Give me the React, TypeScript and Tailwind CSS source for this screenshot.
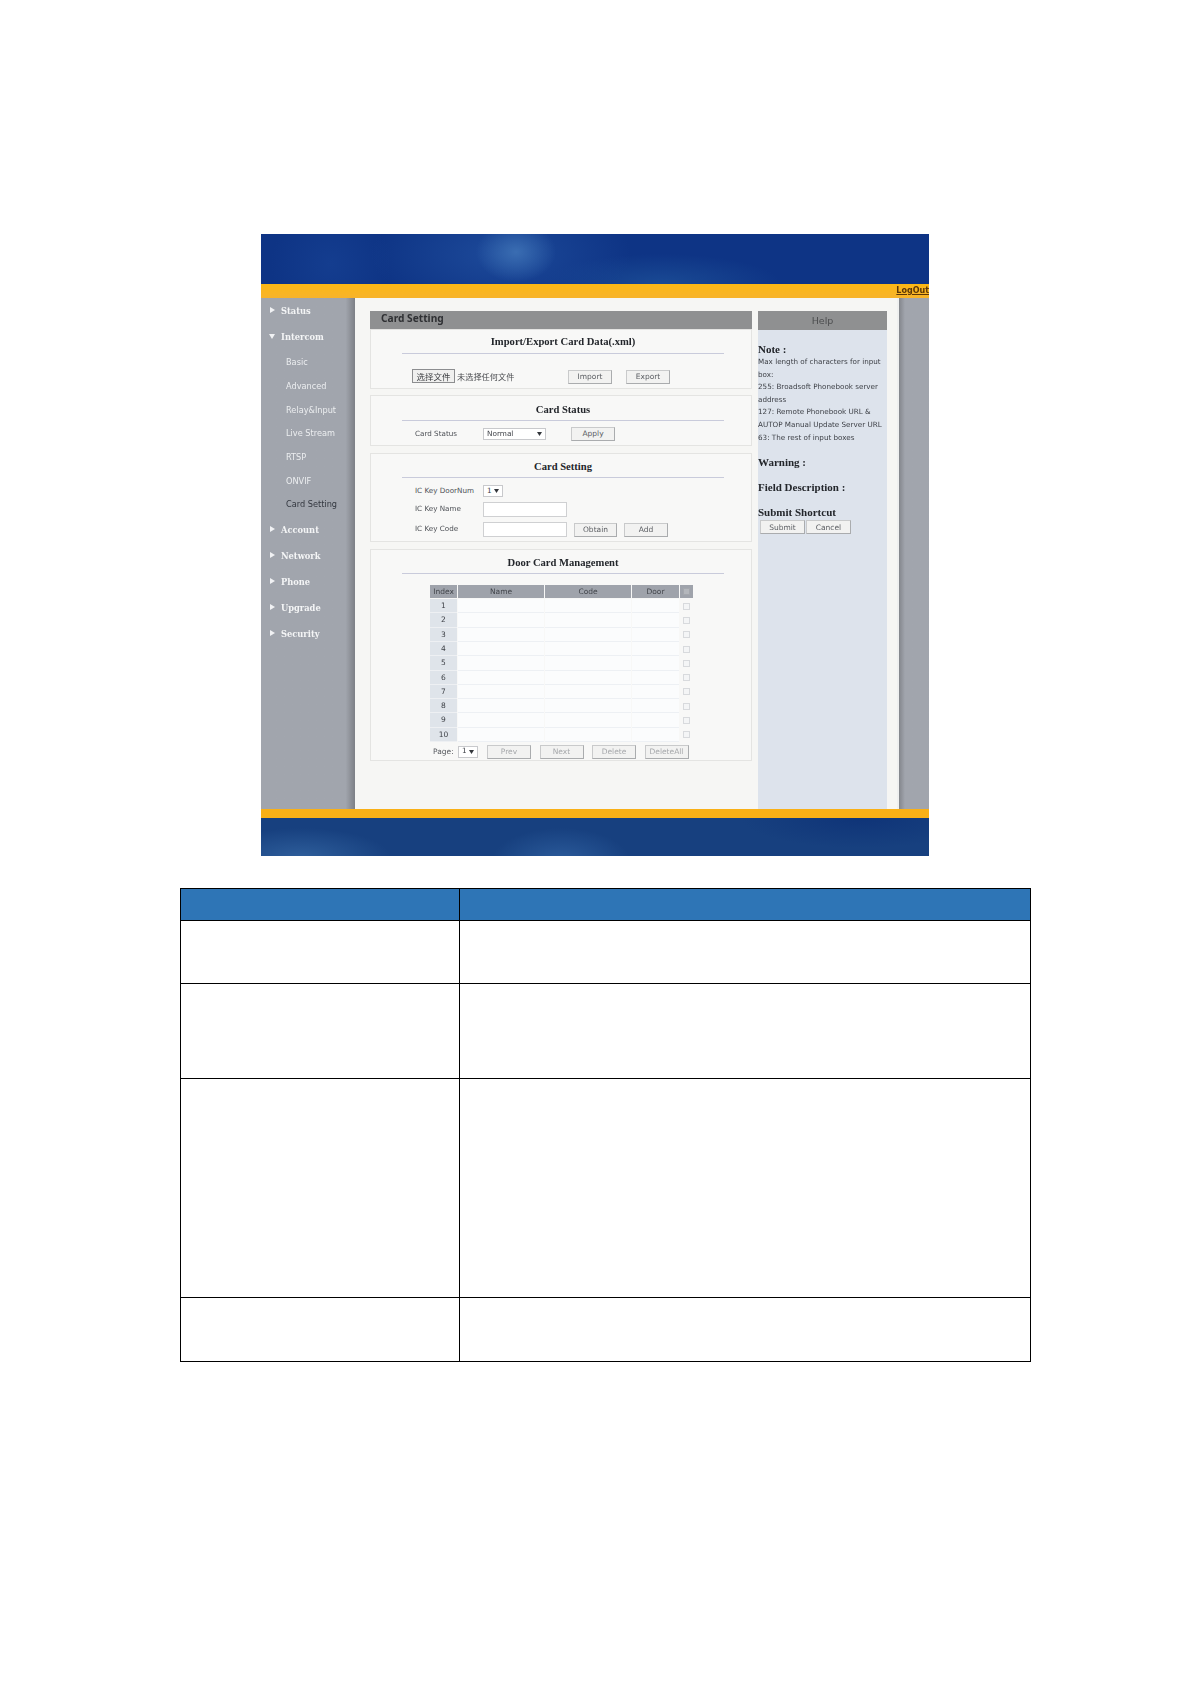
const serif = 'font-["DejaVu_Serif",serif]'
const sans = 'font-["DejaVu_Sans",sans-serif]'
const title = 'font-["Liberation_Serif",serif]'

function Nav({ label, open }: { label: string; open?: boolean }) {
  return (
    <div className="h-[26px] flex items-center pl-[8px] gap-[6px]">
      <svg width="6" height="6" viewBox="0 0 6 6" className="shrink-0 mb-[2px]">
        {open ? <path d="M0 1 L6 1 L3 6 Z" fill="#f1f2f4" /> : <path d="M1 0 L6 3 L1 6 Z" fill="#f1f2f4" />}
      </svg>
      <span className={`${serif} text-[8.3px] font-bold text-[#f4f5f6]`}>{label}</span>
    </div>
  )
}

function SubNav({ label, active }: { label: string; active?: boolean }) {
  return (
    <div className={`${sans} h-[23.7px] flex items-center pl-[25px] text-[8.2px] ${active ? 'text-[#33373f]' : 'text-[#eceef0]'}`}>
      {label}
    </div>
  )
}

function Btn({ label, w, faded }: { label: string; w: string; faded?: boolean }) {
  return (
    <div className={`${sans} ${w} h-[14px] shrink-0 flex items-center justify-center bg-[#f2f2f1] border border-[#c9cacb] border-r-[#aaacae] border-b-[#aaacae] text-[7.5px] ${faded ? 'text-[#a6a8ab]' : 'text-[#5a5d62]'}`}>
      {label}
    </div>
  )
}

function Panel({ title: text, h, head, children }: { title: string; h: string; head: string; children: React.ReactNode }) {
  return (
    <div className={`${h} bg-[#f8f8f7] border border-[#e4e4e2] flex flex-col`}>
      <div className={`${title} ${head} flex items-center justify-center pl-[4px] text-[10.6px] font-bold text-[#23262b]`}>
        {text}
      </div>
      <div className="h-px ml-[31px] w-[322px] bg-[#c9cbdb]" />
      {children}
    </div>
  )
}

function Label({ text }: { text: string }) {
  return <div className={`${sans} w-[68px] shrink-0 text-[7.2px] text-[#4d5056]`}>{text}</div>
}

function Select({ label, w }: { label: string; w: string }) {
  return (
    <div className={`${sans} ${w} h-[12px] shrink-0 flex items-center justify-between px-[3px] bg-white border border-[#c8c9cc] text-[7.3px] text-[#3c3f45]`}>
      <span>{label}</span>
      <svg width="5" height="4" viewBox="0 0 5 4" className="shrink-0">
        <path d="M0 0 L5 0 L2.5 4 Z" fill="#33363b" />
      </svg>
    </div>
  )
}

const rows = ['1', '2', '3', '4', '5', '6', '7', '8', '9', '10']

function DoorTable() {
  return (
    <div className="mt-[11px] ml-[59px] w-[263px]">
      <div className={`${sans} grid grid-cols-[27px_86px_86px_47px_13px] gap-x-px h-[13px] mb-px text-[7.5px] text-[#42454b]`}>
        {['Index', 'Name', 'Code', 'Door'].map((t) => (
          <div key={t} className="bg-[#9fa3ab] flex items-center justify-center">{t}</div>
        ))}
        <div className="bg-[#9fa3ab] flex items-center justify-center">
          <div className="w-[7px] h-[7px] bg-[#b4b7bc] border border-[#a4a7ad]" />
        </div>
      </div>
      {rows.map((r) => (
        <div key={r} className={`${sans} grid grid-cols-[27px_86px_86px_47px_13px] gap-x-px h-[14.3px] text-[7.5px] text-[#3c3f45]`}>
          <div className="bg-[#dfe4ea] border-b border-[#eef0f3] flex items-center justify-center">{r}</div>
          <div className="bg-[#fbfcfd] border-b border-[#edf0f4]" />
          <div className="bg-[#fbfcfd] border-b border-[#edf0f4]" />
          <div className="bg-[#fbfcfd] border-b border-[#edf0f4]" />
          <div className="flex items-center justify-center">
            <div className="w-[7px] h-[7px] bg-[#f4f5f6] border border-[#d8dadd]" />
          </div>
        </div>
      ))}
      <div className="flex items-center h-[17px] mt-[1px] pl-[3px]">
        <span className={`${sans} w-[25px] shrink-0 text-[7.5px] text-[#55585d]`}>Page:</span>
        <Select label="1" w="w-[20px]" />
        <div className="flex ml-[9px] gap-[8.5px]">
          <Btn label="Prev" w="w-[44px]" faded />
          <Btn label="Next" w="w-[44px]" faded />
          <Btn label="Delete" w="w-[44px]" faded />
          <Btn label="DeleteAll" w="w-[44px]" faded />
        </div>
      </div>
    </div>
  )
}

function Help() {
  const lines = [
    'Max length of characters for input',
    'box:',
    '255: Broadsoft Phonebook server',
    'address',
    '127: Remote Phonebook URL &',
    'AUTOP Manual Update Server URL',
    '63: The rest of input boxes',
  ]
  const head = `${title} mt-[12px] h-[13px] flex items-center text-[11px] font-bold text-[#23262b]`
  return (
    <div className="w-[129px] ml-[6px] bg-[#dde3ec] flex flex-col">
      <div className={`${sans} h-[19px] pt-[1px] bg-[#8f9091] flex items-center justify-center text-[9.5px] text-[#4c4d4f]`}>Help</div>
      <div className={`${title} mt-[13px] h-[13px] flex items-center text-[11px] font-bold text-[#23262b]`}>Note :</div>
      <div className={`${sans} text-[7.2px] leading-[12.6px] text-[#3c3f45] whitespace-nowrap`}>
        {lines.map((l) => (
          <div key={l}>{l}</div>
        ))}
      </div>
      <div className={head}>Warning :</div>
      <div className={head}>Field Description :</div>
      <div className={head}>Submit Shortcut</div>
      <div className="flex ml-[2px] mt-[1px] gap-px">
        <Btn label="Submit" w="w-[45px]" />
        <Btn label="Cancel" w="w-[45px]" />
      </div>
    </div>
  )
}

function Row({ h, header, last }: { h: string; header?: boolean; last?: boolean }) {
  return (
    <div className={`${h} flex ${last ? '' : 'border-b border-black'} ${header ? 'bg-[#2e75b6]' : 'bg-white'}`}>
      <div className="w-[279px] border-r border-black" />
      <div className="flex-1" />
    </div>
  )
}

export default function App() {
  return (
    <div className="w-[1191px] h-[1684px] bg-white pt-[234px]">
      <div className="ml-[261px] w-[668px] h-[622px] flex flex-col blur-[0.45px]">
        <div className="h-[50px] bg-[#0e3485] bg-[radial-gradient(ellipse_40px_30px_at_255px_18px,#3a6db2,transparent),radial-gradient(ellipse_130px_60px_at_240px_20px,#1d4a9a,transparent),radial-gradient(ellipse_60px_60px_at_70px_30px,#143d8f,transparent),radial-gradient(ellipse_120px_30px_at_400px_50px,#1a4a94,transparent)]" />
        <div className="h-[14px] bg-gradient-to-b from-[#fcb813] to-[#f7b32a] flex items-center justify-end">
          <span className={`${sans} text-[8px] font-bold text-[#5b3606] underline`}>LogOut</span>
        </div>
        <div className="h-[511px] flex">
          <div className="w-[94px] bg-gradient-to-r from-[#a1a5ad] from-90% to-[#7d8086]">
            <Nav label="Status" />
            <Nav label="Intercom" open />
            <div className="py-[0.5px]">
              {['Basic', 'Advanced', 'Relay&Input', 'Live Stream', 'RTSP', 'ONVIF'].map((s) => (
                <SubNav key={s} label={s} />
              ))}
              <SubNav label="Card Setting" active />
            </div>
            <Nav label="Account" />
            <Nav label="Network" />
            <Nav label="Phone" />
            <Nav label="Upgrade" />
            <Nav label="Security" />
          </div>
          <div className="w-[542px] bg-[#f6f6f4] pt-[13px] pl-[15px] flex">
            <div className="w-[382px] flex flex-col">
              <div className={`font-["Noto_Sans",sans-serif] h-[18px] pb-[2px] bg-[#8f9091] flex items-center pl-[11px] text-[10.2px] font-bold text-[#2f3033]`}>
                Card Setting
              </div>
              <Panel title="Import/Export Card Data(.xml)" h="h-[60px]" head="h-[22px] mt-[1px]">
                <div className="flex items-center mt-[15px] pl-[41px]">
                  <div className={`font-["Noto_Sans_CJK_SC",sans-serif] w-[43px] h-[14px] mb-[1px] shrink-0 flex items-center justify-center bg-[#f0f0ef] border border-[#8d8e90] text-[8.5px] text-[#3a3c40]`}>选择文件</div>
                  <span className={`font-["Noto_Sans_CJK_SC",sans-serif] ml-[2px] w-[111px] shrink-0 text-[8.2px] leading-[12px] mb-[2px] text-[#4a4c50]`}>未选择任何文件</span>
                  <Btn label="Import" w="w-[44px]" />
                  <div className="w-[14px] shrink-0" />
                  <Btn label="Export" w="w-[44px]" />
                </div>
              </Panel>
              <div className="h-[6px]" />
              <Panel title="Card Status" h="h-[51px]" head="h-[20px] mt-[4px]">
                <div className="flex items-center mt-[6px] pl-[44px]">
                  <Label text="Card Status" />
                  <Select label="Normal" w="w-[63px]" />
                  <div className="w-[25px] shrink-0" />
                  <Btn label="Apply" w="w-[44px]" />
                </div>
              </Panel>
              <div className="h-[7px]" />
              <Panel title="Card Setting" h="h-[89px]" head="h-[21px] mt-[2px]">
                <div className="flex flex-col pl-[44px]">
                  <div className="flex items-center mt-[7px]">
                    <Label text="IC Key DoorNum" />
                    <Select label="1" w="w-[20px]" />
                  </div>
                  <div className="flex items-center mt-[5px]">
                    <Label text="IC Key Name" />
                    <div className="w-[84px] h-[15px] bg-white border border-[#cfd0d2]" />
                  </div>
                  <div className="flex items-center mt-[5px]">
                    <Label text="IC Key Code" />
                    <div className="w-[84px] h-[15px] shrink-0 bg-white border border-[#cfd0d2]" />
                    <div className="w-[7px] shrink-0" />
                    <Btn label="Obtain" w="w-[43px]" />
                    <div className="w-[7px] shrink-0" />
                    <Btn label="Add" w="w-[44px]" />
                  </div>
                </div>
              </Panel>
              <div className="h-[7px]" />
              <Panel title="Door Card Management" h="h-[212px]" head="h-[21px] mt-[3px]">
                <DoorTable />
              </Panel>
            </div>
            <Help />
          </div>
          <div className="w-[2px] bg-[#eff0f0]" />
          <div className="w-[30px] bg-gradient-to-r from-[#83868c] from-0% via-[#a1a5ad] via-20% to-[#a1a5ad]" />
        </div>
        <div className="h-[9px] bg-[#f9b016]" />
        <div className="h-[38px] bg-[#17407f] bg-[radial-gradient(ellipse_70px_35px_at_300px_45px,#2c5c9c,transparent),radial-gradient(ellipse_90px_30px_at_40px_40px,#2e5e9b,transparent),radial-gradient(ellipse_120px_30px_at_600px_0px,#0f3478,transparent)]" />
      </div>

      <div className="ml-[180px] mt-[32px] w-[851px] h-[474px] border border-black flex flex-col">
        <Row h="h-[32px]" header />
        <Row h="h-[63px]" />
        <Row h="h-[95px]" />
        <Row h="h-[219px]" />
        <Row h="flex-1" last />
      </div>
    </div>
  )
}
